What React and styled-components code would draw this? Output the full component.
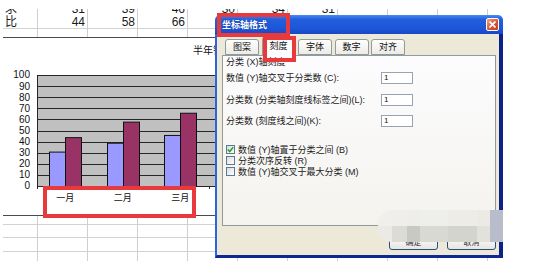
import React from "react";
import styled, { createGlobalStyle } from "styled-components";

const Global = createGlobalStyle`
  html, body { margin: 0; padding: 0; background: #fff; }
  body {
    width: 539px; height: 280px; overflow: hidden;
    font-family: "Liberation Sans", "Noto Sans CJK SC", sans-serif;
  }
`;

const FONT = `"Liberation Sans", "Noto Sans CJK SC", sans-serif`;
const RED = "#e8393c";

const Page = styled.div`
  position: relative;
  width: 539px;
  height: 280px;
  overflow: hidden;
  background: #fff;
`;

const Sheet = styled.div`
  display: flex;
  flex-direction: column;
  width: 500px;
  margin-left: 3px;
`;

const TopSheet = styled.div`
  display: flex;
  flex-direction: column;
  padding-top: 9px;
`;

const SheetRow = styled.div`
  display: grid;
  grid-template-columns: 35px repeat(9, 50px) 15px;
  height: ${(p) => p.$h}px;
  box-sizing: border-box;
  overflow: hidden;
  border-bottom: ${(p) => (p.$line ? "1px solid #d2d2d2" : "none")};
`;

const Cell = styled.div`
  box-sizing: border-box;
  border-right: ${(p) => (p.$last ? "none" : "1px solid #cfcfcf")};
  display: flex;
  align-items: flex-end;
  justify-content: ${(p) => (p.$left ? "flex-start" : "flex-end")};
  padding: 0 2px 0 2px;
  font: 12px/12px ${FONT};
  color: #1a1a1a;
  white-space: nowrap;
  overflow: hidden;
`;

const ChartObject = styled.div`
  position: relative;
  width: 497px;
  height: 179px;
  box-sizing: border-box;
  border-top: 1px solid #4a4a4a;
  border-bottom: 1px solid #4a4a4a;
  background: #fff;
  display: flex;
  flex-direction: column;
`;

const ChartTitle = styled.div`
  padding: 7px 0 0 190px;
  height: 12px;
  font: 10px/12px ${FONT};
  color: #111;
  white-space: nowrap;
`;

const PlotRow = styled.div`
  display: flex;
  align-items: flex-start;
  gap: 7px;
  margin-top: 18px;
  height: 115px;
`;

const YAxis = styled.div`
  width: 27px;
  margin-top: -5.55px;
  display: flex;
  flex-direction: column;
`;

const YLabel = styled.div`
  height: 11.1px;
  line-height: 11.1px;
  text-align: right;
  font-size: 10px;
  font-family: ${FONT};
  color: #111;
`;

const CategoryRow = styled.div`
  display: flex;
  padding-left: 33.5px;
  margin-top: 2px;
  height: 12px;
`;

const CategoryLabel = styled.div`
  width: 57.5px;
  text-align: center;
  font: 9px/12px ${FONT};
  color: #111;
`;

const Frame = styled.div`
  position: absolute;
  left: ${(p) => p.$x}px;
  top: ${(p) => p.$y}px;
  width: ${(p) => p.$w}px;
  height: ${(p) => p.$h}px;
  box-sizing: border-box;
  border: 4px solid ${RED};
  z-index: 5;
  pointer-events: none;
`;

const BottomSheet = styled.div`
  display: flex;
  flex-direction: column;
`;

/* ---------- dialog ---------- */

const Dialog = styled.div`
  position: absolute;
  left: 215px;
  top: 15px;
  width: 288px;
  height: 243px;
  display: flex;
  flex-direction: column;
  z-index: 2;
  font-family: ${FONT};
`;

const TitleBar = styled.div`
  flex: none;
  height: 19px;
  display: flex;
  align-items: center;
  justify-content: space-between;
  padding: 0 4px 0 7px;
  border-radius: 5px 5px 0 0;
  background: linear-gradient(#4a8af4, #2360dc 22%, #1c56d7 70%, #1848c6);
  color: #fff;
  font-weight: bold;
  font-size: 9px;
  text-shadow: 0 0 1px #0a2a8a;
`;

const CloseButton = styled.div`
  width: 13px;
  height: 13px;
  box-sizing: border-box;
  border: 1px solid #fff;
  border-radius: 2px;
  background: linear-gradient(135deg, #f0a081, #d8512f 60%, #c3401f);
  display: flex;
  align-items: center;
  justify-content: center;
`;

const Body = styled.div`
  flex: 1;
  display: flex;
  flex-direction: column;
  background: #ece9d8;
  border-left: 2px solid #2c63df;
  border-right: 4px solid #0c2289;
  border-bottom: 3px solid #0d2a94;
  padding: 3px 3px 5px 5px;
`;

const TabsRow = styled.div`
  position: relative;
  z-index: 1;
  display: flex;
  align-items: flex-end;
  gap: 2.5px;
  height: 18px;
  padding-left: 3px;
`;

const Tab = styled.div`
  width: 34px;
  height: ${(p) => (p.$active ? 19 : 16)}px;
  margin-bottom: ${(p) => (p.$active ? -1 : 0)}px;
  box-sizing: border-box;
  border: 1px solid #919b9c;
  border-bottom: ${(p) => (p.$active ? "none" : "1px solid #919b9c")};
  border-radius: 3px 3px 0 0;
  background: ${(p) => (p.$active ? "#fcfcfe" : "linear-gradient(#fefefe, #ecebe5)")};
  font-size: 9px;
  line-height: ${(p) => (p.$active ? 16 : 14)}px;
  text-align: center;
  color: #111;
`;

const Panel = styled.div`
  flex: none;
  height: 171px;
  box-sizing: border-box;
  border: 1px solid #919b9c;
  background: linear-gradient(#fcfcfe, #f4f3ee);
  padding: 0 3px;
  display: flex;
  flex-direction: column;
`;

const GroupLabel = styled.div`
  font-size: 9px;
  line-height: 12px;
  color: #222;
`;

const FieldList = styled.div`
  display: flex;
  flex-direction: column;
  gap: 9.5px;
  margin-top: 4px;
`;

const Field = styled.div`
  display: grid;
  grid-template-columns: 155px 32px;
  align-items: center;
  height: 12px;
`;

const FieldLabel = styled.span`
  font-size: 9px;
  line-height: 12px;
  color: #222;
  white-space: nowrap;
`;

const TextBox = styled.div`
  width: 32px;
  height: 12px;
  box-sizing: border-box;
  border: 1px solid #97a3b1;
  background: #fff;
  font-size: 8px;
  line-height: 10px;
  padding-left: 2px;
  color: #111;
`;

const CheckList = styled.div`
  display: flex;
  flex-direction: column;
  margin-top: 17px;
`;

const CheckRow = styled.div`
  display: flex;
  align-items: center;
  gap: 3px;
  height: 11px;
  font-size: 9px;
  color: #222;
  white-space: nowrap;
`;

const CheckBox = styled.div`
  width: 9px;
  height: 9px;
  box-sizing: border-box;
  border: 1px solid #5a7a9a;
  background: linear-gradient(135deg, #dcdcd6, #fff);
  display: flex;
  align-items: center;
  justify-content: center;
`;

const ButtonRow = styled.div`
  display: flex;
  justify-content: flex-end;
  gap: 9px;
  margin-top: 10px;
  height: 14px;
`;

const Button = styled.div`
  width: 49px;
  height: 14px;
  box-sizing: border-box;
  border: 1px solid #2a4f80;
  border-radius: 3px;
  background: linear-gradient(#fdfdfd, #e6e5df);
  font-size: 8px;
  line-height: 12px;
  text-align: center;
  color: #333;
`;

const Watermark = styled.div`
  position: absolute;
  left: 163px;
  top: 195px;
  width: 125px;
  height: 32px;
  display: grid;
  grid-template-columns: 14px 15px 13px 28px 29px 13px 13px;
  grid-template-rows: 16px 16px;
  border-radius: 14px 0 0 14px;
  overflow: hidden;
  filter: blur(0.7px);
  z-index: 3;
`;

const Tile = styled.div`
  background: ${(p) => p.$c};
`;

const Check = () => (
  <svg width="7" height="7" viewBox="0 0 7 7">
    <polyline points="0.8,3.5 2.7,5.5 6.2,1.2" fill="none" stroke="#21a121" strokeWidth="1.5" />
  </svg>
);

const CloseX = () => (
  <svg width="7" height="7" viewBox="0 0 7 7">
    <line x1="0.5" y1="0.5" x2="6.5" y2="6.5" stroke="#fff" strokeWidth="1.6" />
    <line x1="6.5" y1="0.5" x2="0.5" y2="6.5" stroke="#fff" strokeWidth="1.6" />
  </svg>
);

const blue = [31, 39, 46];
const red = [44, 58, 66];
const groupX = [12, 70, 127];
const K = 1.11;

const Plot = () => (
  <svg width="200" height="115" viewBox="0 0 200 115">
    <rect x="0" y="0" width="200" height="111" fill="#c0c0c0" />
    {Array.from({ length: 11 }, (_, i) => {
      const y = Math.round(111 - i * 11.1) + 0.5;
      return <line key={i} x1="0" y1={y} x2="200" y2={y} stroke="#262626" strokeWidth="1" />;
    })}
    <line x1="0.5" y1="0" x2="0.5" y2="112" stroke="#262626" />
    {groupX.map((gx, i) => (
      <g key={i}>
        <rect x={gx + 0.5} y={111.5 - blue[i] * K} width="16" height={blue[i] * K} fill="#9999ff" stroke="#111" />
        <rect x={gx + 16.5} y={111.5 - red[i] * K} width="16" height={red[i] * K} fill="#993366" stroke="#111" />
      </g>
    ))}
    {[0.5, 58.5, 115.5, 172.5].map((x) => (
      <line key={x} x1={x} y1="111" x2={x} y2="114" stroke="#262626" />
    ))}
  </svg>
);

const topRow1 = ["求", "31", "39", "46", "30", "34", "31", "", "", "", ""];
const topRow2 = ["比", "44", "58", "66", "", "", "", "", "", "", ""];
const empty = Array(11).fill("");

const Row = ({ h, line, cells }) => (
  <SheetRow $h={h} $line={line}>
    {cells.map((c, i) => (
      <Cell key={i} $left={i === 0} $last={i === 10}>
        {c}
      </Cell>
    ))}
  </SheetRow>
);

export default function App() {
  return (
    <Page>
      <Global />
      <Sheet>
        <TopSheet>
          <Row h={6} cells={topRow1} />
          <Row h={14} line cells={topRow2} />
          <Row h={8} cells={empty} />
        </TopSheet>

        <ChartObject>
          <ChartTitle>半年销售情况</ChartTitle>
          <PlotRow>
            <YAxis>
              {[100, 90, 80, 70, 60, 50, 40, 30, 20, 10, 0].map((v) => (
                <YLabel key={v}>{v}</YLabel>
              ))}
            </YAxis>
            <Plot />
          </PlotRow>
          <CategoryRow>
            <CategoryLabel>一月</CategoryLabel>
            <CategoryLabel>二月</CategoryLabel>
            <CategoryLabel>三月</CategoryLabel>
          </CategoryRow>
          <Frame $x={40} $y={148} $w={153} $h={32} />
        </ChartObject>

        <BottomSheet>
          <Row h={9} line cells={empty} />
          <Row h={13} line cells={empty} />
          <Row h={14} line cells={empty} />
          <Row h={9} cells={empty} />
        </BottomSheet>
      </Sheet>

      <Dialog>
        <TitleBar>
          <span>坐标轴格式</span>
          <CloseButton>
            <CloseX />
          </CloseButton>
        </TitleBar>
        <Body>
          <TabsRow>
            <Tab>图案</Tab>
            <Tab $active>刻度</Tab>
            <Tab>字体</Tab>
            <Tab>数字</Tab>
            <Tab>对齐</Tab>
          </TabsRow>
          <Panel>
            <GroupLabel>分类 (X)轴刻度</GroupLabel>
            <FieldList>
              <Field>
                <FieldLabel>数值 (Y)轴交叉于分类数 (C):</FieldLabel>
                <TextBox>1</TextBox>
              </Field>
              <Field>
                <FieldLabel>分类数 (分类轴刻度线标签之间)(L):</FieldLabel>
                <TextBox>1</TextBox>
              </Field>
              <Field>
                <FieldLabel>分类数 (刻度线之间)(K):</FieldLabel>
                <TextBox>1</TextBox>
              </Field>
            </FieldList>
            <CheckList>
              <CheckRow>
                <CheckBox>
                  <Check />
                </CheckBox>
                数值 (Y)轴置于分类之间 (B)
              </CheckRow>
              <CheckRow>
                <CheckBox />
                分类次序反转 (R)
              </CheckRow>
              <CheckRow>
                <CheckBox />
                数值 (Y)轴交叉于最大分类 (M)
              </CheckRow>
            </CheckList>
          </Panel>
          <ButtonRow>
            <Button>确定</Button>
            <Button>取消</Button>
          </ButtonRow>
        </Body>
        <Watermark>
          {["#f0efeb", "#efeeea", "#eeede9", "#eeeeea", "#edece7", "#ebeae5", "#b9bcca",
            "#ebeae6", "#dcdcd7", "#c8c8c4", "#d9d9d4", "#d4d4cf", "#e2e1db", "#b9bcca"].map((c, i) => (
            <Tile key={i} $c={c} />
          ))}
        </Watermark>
        <Frame $x={2} $y={-2} $w={73} $h={24} />
        <Frame $x={48} $y={21} $w={33} $h={26} />
      </Dialog>
    </Page>
  );
}
